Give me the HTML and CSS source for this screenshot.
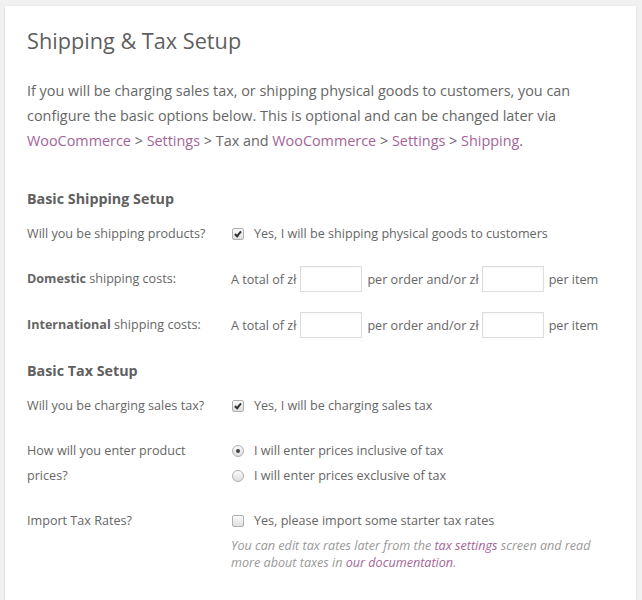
FILE: index.html
```html
<!DOCTYPE html>
<html>
<head>
<meta charset="utf-8">
<link rel="stylesheet" href="styles.css">
</head>
<body>
<div class="card">
  <h1 class="title">Shipping &amp; Tax Setup</h1>
  <p class="intro">If you will be charging sales tax, or shipping physical goods to customers, you can configure the basic options below. This is optional and can be changed later via <a class="lnk">WooCommerce</a> <span class="sep">&gt;</span> <a class="lnk">Settings</a> <span class="sep">&gt; Tax</span> and <a class="lnk">WooCommerce</a> <span class="sep">&gt;</span> <a class="lnk">Settings</a> <span class="sep">&gt;</span> <a class="lnk">Shipping</a>.</p>

  <h2 class="section">Basic Shipping Setup</h2>
  <div class="row">
    <div class="label">Will you be shipping products?</div>
    <div class="field"><span class="check on"></span><span>Yes, I will be shipping physical goods to customers</span></div>
  </div>
  <div class="row">
    <div class="label"><b>Domestic</b> shipping costs:</div>
    <div class="field">A total of zł<span class="input"></span>per order and/or zł<span class="input second"></span>per item</div>
  </div>
  <div class="row">
    <div class="label"><b>International</b> shipping costs:</div>
    <div class="field">A total of zł<span class="input"></span>per order and/or zł<span class="input second"></span>per item</div>
  </div>

  <h2 class="section tax">Basic Tax Setup</h2>
  <div class="row">
    <div class="label">Will you be charging sales tax?</div>
    <div class="field"><span class="check on"></span><span>Yes, I will be charging sales tax</span></div>
  </div>
  <div class="row">
    <div class="label">How will you enter product prices?</div>
    <div class="field col">
      <div class="opt"><span class="radio on"></span><span>I will enter prices inclusive of tax</span></div>
      <div class="opt"><span class="radio"></span><span>I will enter prices exclusive of tax</span></div>
    </div>
  </div>
  <div class="row">
    <div class="label">Import Tax Rates?</div>
    <div class="field col">
      <div class="opt"><span class="check"></span><span>Yes, please import some starter tax rates</span></div>
      <p class="desc">You can edit tax rates later from the <a class="lnk">tax settings</a> screen and read more about taxes in <a class="lnk">our documentation</a>.</p>
    </div>
  </div>
</div>
</body>
</html>
```

FILE: styles.css
```css
html, body {
  margin: 0;
  padding: 0;
  background: #f1f1f1;
}
body {
  font-family: "Open Sans", "Liberation Sans", sans-serif;
  color: #666;
  font-size: 14px;
}
.card {
  margin: 6px 6px 0 5px;
  background: #fff;
  box-shadow: 0 1px 3px rgba(0,0,0,0.13);
  padding: 20px 22px 40px 22px;
  min-height: 560px;
  box-sizing: border-box;
}
.title {
  margin: 0;
  font-size: 21.7px;
  line-height: 30px;
  font-weight: 400;
  color: #5f5f5f;
}
.intro {
  margin: 22px 0 0 0;
  font-size: 14.4px;
  line-height: 25px;
}
.lnk {
  color: #a46497;
  text-decoration: none;
}
.sep {
  color: #666;
}
.section {
  margin: 33px 0 0 0;
  font-size: 14.3px;
  line-height: 25px;
  font-weight: 700;
  color: #606060;
}
.section.tax {
  margin-top: 10px;
}
.row {
  display: grid;
  grid-template-columns: 204px 1fr;
  padding: 10px 0;
  line-height: 25px;
  font-size: 12.6px;
}
.label {
  padding-right: 14px;
}
.label b {
  font-weight: 700;
}
.field {
  display: flex;
  align-items: center;
  white-space: nowrap;
}
.field.col {
  flex-direction: column;
  align-items: flex-start;
}
.opt {
  display: flex;
  align-items: center;
  height: 25px;
}
.input {
  display: inline-block;
  width: 60px;
  height: 24px;
  border: 1px solid #ddd;
  margin: 0 5px 0 4px;
  box-shadow: inset 0 1px 2px rgba(0,0,0,0.04);
}
.input.second {
  margin-left: 3px;
}
.check {
  position: relative;
  display: inline-block;
  width: 10px;
  height: 10px;
  border: 1px solid #b0b0b0;
  border-radius: 2px;
  background: linear-gradient(#fbfbfb, #dedede);
  margin: 0 10px 0 1px;
}
.check.on::after {
  content: "";
  position: absolute;
  left: 3px;
  top: 1px;
  width: 2px;
  height: 5px;
  border: solid #333;
  border-width: 0 2px 2px 0;
  transform: rotate(40deg);
}
.radio {
  position: relative;
  display: inline-block;
  width: 10px;
  height: 10px;
  border: 1px solid #b0b0b0;
  border-radius: 50%;
  background: linear-gradient(#fbfbfb, #dedede);
  margin: 0 10px 0 1px;
}
.radio.on::after {
  content: "";
  position: absolute;
  left: 3px;
  top: 3px;
  width: 4px;
  height: 4px;
  border-radius: 50%;
  background: #444;
}
.desc {
  margin: 4px 0 0 0;
  font-style: italic;
  font-size: 12.6px;
  line-height: 17px;
  color: #999;
  white-space: normal;
}
```
